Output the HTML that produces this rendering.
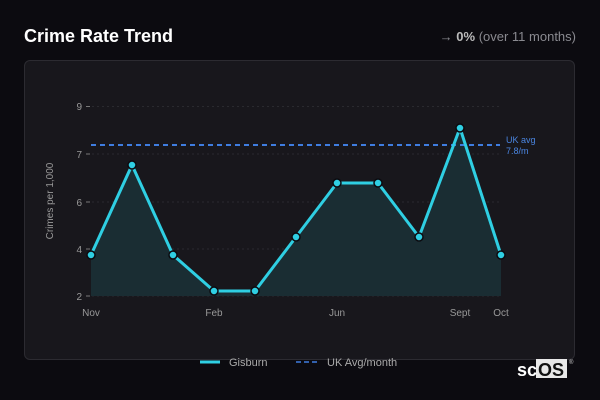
<!DOCTYPE html>
<html><head><meta charset="utf-8"><style>
body{margin:0;width:600px;height:400px;background:#0c0b10;font-family:"Liberation Sans",sans-serif;overflow:hidden;position:relative}
.t{position:absolute;left:24px;top:26px;color:#fff;font-weight:bold;font-size:18px}
.r{position:absolute;right:24px;top:29px;color:#8a8a90;font-size:13px}
.r b{color:#bbb}
.card{position:absolute;left:24px;top:60px;width:551px;height:300px;background:#18171c;border:1px solid #2c2b31;border-radius:6px;box-sizing:border-box}
</style></head><body>
<div class="t">Crime Rate Trend</div>
<div class="r">→ <b>0%</b> (over 11 months)</div>
<div class="card"></div>
<svg width="600" height="400" style="position:absolute;left:0;top:0" font-family="Liberation Sans,sans-serif">
<g stroke="#2a2a2f" stroke-dasharray="2,3" stroke-width="1">
<line x1="92" x2="500" y1="106.5" y2="106.5"/><line x1="92" x2="500" y1="154" y2="154"/><line x1="92" x2="500" y1="202" y2="202"/><line x1="92" x2="500" y1="249" y2="249"/><line x1="92" x2="500" y1="296" y2="296"/>
</g>
<g stroke="#777"><line x1="86" x2="90" y1="106.5" y2="106.5"/><line x1="86" x2="90" y1="154" y2="154"/><line x1="86" x2="90" y1="202" y2="202"/><line x1="86" x2="90" y1="249" y2="249"/><line x1="86" x2="90" y1="296" y2="296"/></g>
<g fill="#999" font-size="10" text-anchor="end"><text x="82" y="110">9</text><text x="82" y="158">7</text><text x="82" y="206">6</text><text x="82" y="253">4</text><text x="82" y="300">2</text></g>
<text transform="translate(53,201) rotate(-90)" fill="#999" font-size="10" text-anchor="middle">Crimes per 1,000</text>
<polygon fill="#1a2d33" points="91,296 91,255 132,165 173,255 214,291 255,291 296,237 337,183 378,183 419,237 460,128 501,255 501,296"/>
<line x1="91" x2="500" y1="145" y2="145" stroke="#3f7de0" stroke-width="2" stroke-dasharray="5,4"/>
<text x="506" y="143" fill="#4a85e0" font-size="9">UK avg</text><text x="506" y="154" fill="#4a85e0" font-size="9">7.8/m</text>
<polyline fill="none" stroke="#2fcfe3" stroke-width="3" stroke-linejoin="round" points="91,255 132,165 173,255 214,291 255,291 296,237 337,183 378,183 419,237 460,128 501,255"/>
<g fill="#2fcfe3" stroke="#0c0b10" stroke-width="1.5">
<circle cx="91" cy="255" r="4"/><circle cx="132" cy="165" r="4"/><circle cx="173" cy="255" r="4"/><circle cx="214" cy="291" r="4"/><circle cx="255" cy="291" r="4"/><circle cx="296" cy="237" r="4"/><circle cx="337" cy="183" r="4"/><circle cx="378" cy="183" r="4"/><circle cx="419" cy="237" r="4"/><circle cx="460" cy="128" r="4"/><circle cx="501" cy="255" r="4"/>
</g>
<g fill="#999" font-size="10" text-anchor="middle"><text x="91" y="316">Nov</text><text x="214" y="316">Feb</text><text x="337" y="316">Jun</text><text x="460" y="316">Sept</text><text x="501" y="316">Oct</text></g>
<line x1="200" x2="220" y1="362" y2="362" stroke="#2fcfe3" stroke-width="3"/>
<text x="229" y="366" fill="#aaa" font-size="11">Gisburn</text>
<line x1="296" x2="318" y1="362" y2="362" stroke="#3f7de0" stroke-width="1.5" stroke-dasharray="5,3"/>
<text x="327" y="366" fill="#aaa" font-size="11">UK Avg/month</text>
<rect x="536" y="359" width="31" height="19" fill="#e8e8e8"/>
<text x="517" y="376" fill="#fff" font-size="18" font-weight="bold">sc</text>
<text x="538" y="376" fill="#111" font-size="18" font-weight="bold">OS</text>
<text x="569" y="364" fill="#ccc" font-size="6">®</text>
</svg>
</body></html>
